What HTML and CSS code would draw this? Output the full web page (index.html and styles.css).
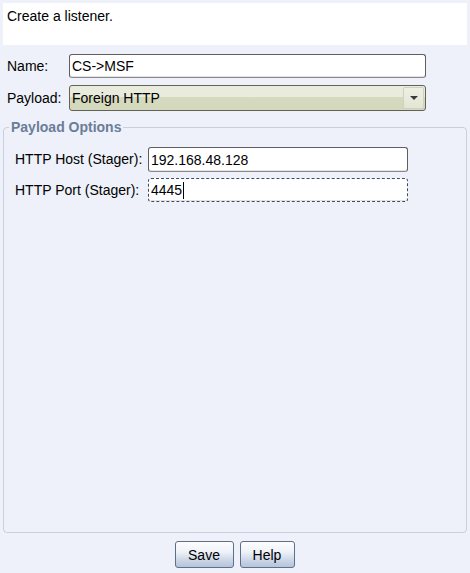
FILE: index.html
```html
<!DOCTYPE html>
<html>
<head>
<meta charset="utf-8">
<link rel="stylesheet" href="styles.css">
</head>
<body>
<div class="dialog">
  <div class="header">Create a listener.</div>
  <div class="form">
    <div class="row">
      <label class="lbl">Name:</label>
      <input class="field" type="text" value="CS-&gt;MSF">
    </div>
    <div class="row">
      <label class="lbl">Payload:</label>
      <div class="select">
        <span class="select-text">Foreign HTTP</span>
        <span class="select-btn"><span class="arrow"></span></span>
      </div>
    </div>
  </div>
  <fieldset class="group">
    <legend class="legend">Payload Options</legend>
    <div class="row row-opt">
      <label class="lbl">HTTP Host (Stager):</label>
      <input class="field field-opt host" type="text" value="192.168.48.128">
    </div>
    <div class="row row-opt">
      <label class="lbl">HTTP Port (Stager):</label>
      <div class="field field-opt focused">4445<span class="caret"></span></div>
    </div>
  </fieldset>
  <div class="buttons">
    <button class="btn btn-save">Save</button>
    <button class="btn btn-help">Help</button>
  </div>
</div>
</body>
</html>
```
FILE: styles.css
```css
* { box-sizing: border-box; }
html, body { margin: 0; padding: 0; }
body {
  background: #eef1f9;
  font-family: "Liberation Sans", Arial, sans-serif;
  font-size: 14px;
  color: #000;
}
.dialog {
  width: 470px;
  height: 573px;
  display: flex;
  flex-direction: column;
}
.header {
  margin: 3px 3px 0;
  height: 42px;
  background: #fff;
  padding: 5px 4px 0;
  line-height: 17px;
}
.form {
  padding: 9px 44px 0 7px;
  display: flex;
  flex-direction: column;
  gap: 7px;
}
.row {
  display: grid;
  grid-template-columns: 62px 1fr;
  align-items: center;
}
.lbl { line-height: 17px; }
.field {
  font-family: "Liberation Sans", Arial, sans-serif;
  font-size: 14px;
  color: #000;
  height: 24px;
  width: 100%;
  margin: 0;
  padding: 0 2px;
  border: 1px solid #5e5e5e;
  border-bottom-color: #8a8a8a;
  border-radius: 3px;
  background: #fff;
  box-shadow: inset 0 -1px 0 #e2e2e2;
  outline: none;
  display: flex;
  align-items: center;
}
.select {
  height: 26px;
  border: 1px solid #626255;
  border-radius: 3px;
  background: linear-gradient(#e9ebdd 0%, #e9ebdd 45%, #d5d9bd 48%, #d4d8bc 100%);
  display: flex;
  align-items: center;
  padding: 0 1px 0 2px;
}
.select-text { flex: 1; }
.select-btn {
  width: 21px;
  height: 22px;
  border: 1px solid #cfd2bd;
  border-radius: 2px;
  background: linear-gradient(#eef0e5, #e3e6d3);
  display: flex;
  align-items: center;
  justify-content: center;
}
.arrow {
  width: 0;
  height: 0;
  border-left: 4px solid transparent;
  border-right: 4px solid transparent;
  border-top: 4px solid #3a3a3a;
}
.group {
  flex: 1;
  margin: 8px 3px 0;
  padding: 12px 58px 0 11px;
  border: 1px solid #c8d0de;
  border-radius: 4px;
  display: flex;
  flex-direction: column;
  gap: 6px;
  min-width: 0;
}
.legend {
  font-weight: bold;
  font-size: 14px;
  color: #6b7d99;
  padding: 0 2px;
  margin-left: -6px;
  line-height: 16px;
}
.row-opt { grid-template-columns: 133px 1fr; }
.host { height: 25px; }
.focused {
  border: 1px dashed #3c4c66;
}
.caret {
  display: inline-block;
  width: 1px;
  height: 17px;
  background: #000;
  margin-left: 1px;
}
.buttons {
  display: flex;
  justify-content: center;
  gap: 6px;
  margin: 8px 0 5px;
  padding-right: 1px;
}
.btn {
  font-family: "Liberation Sans", Arial, sans-serif;
  font-size: 14px;
  color: #000;
  height: 27px;
  margin: 0;
  padding: 0;
  border: 1px solid #5e6f88;
  border-radius: 3px;
  background: linear-gradient(#fdfdfe 0%, #eef2f8 40%, #c9d4e5 75%, #b5c4da 100%);
}
.btn-save { width: 59px; }
.btn-help { width: 55px; }
```
